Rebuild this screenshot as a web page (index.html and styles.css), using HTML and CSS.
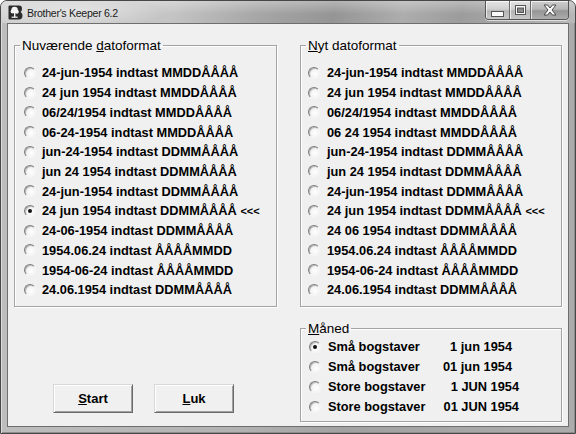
FILE: index.html
```html
<!DOCTYPE html>
<html lang="da">
<head>
<meta charset="utf-8">
<title>Brother's Keeper 6.2</title>
<link rel="stylesheet" href="styles.css">
</head>
<body>
<div class="window">
  <div class="titlebar">
    <svg class="appicon" width="15" height="15" viewBox="0 0 15 15">
      <path d="M0.5 1.5 Q0.5 0.5 1.5 0.5 H11 Q14 0.5 14 3.8 Q14 6 12.6 7 Q14.5 8 14.5 10.6 Q14.5 14.5 11 14.5 H1.5 Q0.5 14.5 0.5 13.5 Z" fill="#2b2b2b"/>
      <circle cx="6.6" cy="5" r="3.2" fill="#f4f4f4"/>
      <circle cx="4.6" cy="6.6" r="2" fill="#f4f4f4"/>
      <circle cx="8.8" cy="6.8" r="2" fill="#f4f4f4"/>
      <rect x="6" y="7" width="1.4" height="5.2" fill="#f4f4f4"/>
      <rect x="3.6" y="11.6" width="6" height="1.2" fill="#f4f4f4"/>
    </svg>
    <span class="title">Brother's Keeper 6.2</span>
    <div class="caption">
      <span class="cbtn min"><svg width="13" height="6" viewBox="0 0 13 6"><rect x="0.5" y="0.5" width="12" height="5" fill="#fafafa" stroke="#555"/></svg></span>
      <span class="cbtn max"><svg width="11" height="10" viewBox="0 0 11 10"><rect x="0.5" y="0.5" width="10" height="9" fill="#fafafa" stroke="#555"/><rect x="2.5" y="3" width="6" height="4.5" fill="#8a8a8a" stroke="#555"/></svg></span>
      <span class="cbtn close"><svg width="14" height="12" viewBox="0 0 14 12"><path d="M1 1 H4.6 L7 4 L9.4 1 H13 L9 6 L13 11 H9.4 L7 8 L4.6 11 H1 L5 6 Z" fill="#fbfbfb" stroke="#4a4a4a" stroke-width="1" stroke-linejoin="round"/></svg></span>
    </div>
  </div>
  <div class="client">
    <div class="col col-left">
      <fieldset class="group">
        <legend>Nuværende <u>d</u>atoformat</legend>
        <div class="list list-left">
          <label class="opt"><span class="radio"></span><span>24-jun-1954 indtast MMDDÅÅÅÅ</span></label>
          <label class="opt"><span class="radio"></span><span>24 jun 1954 indtast MMDDÅÅÅÅ</span></label>
          <label class="opt"><span class="radio"></span><span>06/24/1954 indtast MMDDÅÅÅÅ</span></label>
          <label class="opt"><span class="radio"></span><span>06-24-1954 indtast MMDDÅÅÅÅ</span></label>
          <label class="opt"><span class="radio"></span><span>jun-24-1954 indtast DDMMÅÅÅÅ</span></label>
          <label class="opt"><span class="radio"></span><span>jun 24 1954 indtast DDMMÅÅÅÅ</span></label>
          <label class="opt"><span class="radio"></span><span>24-jun-1954 indtast DDMMÅÅÅÅ</span></label>
          <label class="opt"><span class="radio on"></span><span>24 jun 1954 indtast DDMMÅÅÅÅ <span class="mark">&lt;&lt;&lt;</span></span></label>
          <label class="opt"><span class="radio"></span><span>24-06-1954 indtast DDMMÅÅÅÅ</span></label>
          <label class="opt"><span class="radio"></span><span>1954.06.24 indtast ÅÅÅÅMMDD</span></label>
          <label class="opt"><span class="radio"></span><span>1954-06-24 indtast ÅÅÅÅMMDD</span></label>
          <label class="opt"><span class="radio"></span><span>24.06.1954 indtast DDMMÅÅÅÅ</span></label>
        </div>
      </fieldset>
      <div class="buttons">
        <button class="btn"><u>S</u>tart</button>
        <button class="btn"><u>L</u>uk</button>
      </div>
    </div>
    <div class="col col-right">
      <fieldset class="group">
        <legend><u>N</u>yt datoformat</legend>
        <div class="list list-right">
          <label class="opt"><span class="radio"></span><span>24-jun-1954 indtast MMDDÅÅÅÅ</span></label>
          <label class="opt"><span class="radio"></span><span>24 jun 1954 indtast MMDDÅÅÅÅ</span></label>
          <label class="opt"><span class="radio"></span><span>06/24/1954 indtast MMDDÅÅÅÅ</span></label>
          <label class="opt"><span class="radio"></span><span>06 24 1954 indtast MMDDÅÅÅÅ</span></label>
          <label class="opt"><span class="radio"></span><span>jun-24-1954 indtast DDMMÅÅÅÅ</span></label>
          <label class="opt"><span class="radio"></span><span>jun 24 1954 indtast DDMMÅÅÅÅ</span></label>
          <label class="opt"><span class="radio"></span><span>24-jun-1954 indtast DDMMÅÅÅÅ</span></label>
          <label class="opt"><span class="radio"></span><span>24 jun 1954 indtast DDMMÅÅÅÅ <span class="mark">&lt;&lt;&lt;</span></span></label>
          <label class="opt"><span class="radio"></span><span>24 06 1954 indtast DDMMÅÅÅÅ</span></label>
          <label class="opt"><span class="radio"></span><span>1954.06.24 indtast ÅÅÅÅMMDD</span></label>
          <label class="opt"><span class="radio"></span><span>1954-06-24 indtast ÅÅÅÅMMDD</span></label>
          <label class="opt"><span class="radio"></span><span>24.06.1954 indtast DDMMÅÅÅÅ</span></label>
        </div>
      </fieldset>
      <fieldset class="group month">
        <legend><u>M</u>åned</legend>
        <div class="list list-month">
          <label class="opt mopt"><span class="radio on"></span><span class="mlabel">Små bogstaver</span><span class="mdate">1 jun 1954</span></label>
          <label class="opt mopt"><span class="radio"></span><span class="mlabel">Små bogstaver</span><span class="mdate">01 jun 1954</span></label>
          <label class="opt mopt"><span class="radio"></span><span class="mlabel">Store bogstaver</span><span class="mdate upper">1 JUN 1954</span></label>
          <label class="opt mopt"><span class="radio"></span><span class="mlabel">Store bogstaver</span><span class="mdate upper">01 JUN 1954</span></label>
        </div>
      </fieldset>
    </div>
  </div>
</div>
</body>
</html>
```
FILE: styles.css
```css
html, body {
  margin: 0;
  padding: 0;
}
body {
  width: 576px;
  height: 434px;
  overflow: hidden;
  background: #ffffff;
  font-family: "Liberation Sans", Arial, sans-serif;
  color: #000;
}
.window {
  box-sizing: border-box;
  width: 576px;
  height: 434px;
  border: 1px solid #474747;
  border-radius: 7px 7px 0 0;
  background: linear-gradient(90deg, #bdbdbd 0%, #b3b3b3 40%, #a2a2a2 60%, #acacac 100%);
  display: flex;
  flex-direction: column;
  padding: 0 6px 6px;
  box-shadow: inset 1px 1px 0 #dcdcdc, inset -1px -1px 0 #8c8c8c;
}
.titlebar {
  height: 22px;
  margin: 0 -6px;
  padding: 0 6px;
  border-radius: 6px 6px 0 0;
  display: flex;
  align-items: center;
  background:
    radial-gradient(ellipse 95px 14px at 70px 12px, rgba(255,255,255,0.5), rgba(255,255,255,0) 100%),
    linear-gradient(180deg, rgba(255,255,255,0.3) 0%, rgba(255,255,255,0) 60%),
    linear-gradient(100deg, #cfcfcf 0%, #c4c4c4 30%, #a6a6a6 45%, #959595 58%, #adadad 70%, #9c9c9c 80%, #b8b8b8 100%);
}
.appicon {
  margin-left: 1px;
  margin-top: 1px;
  flex: none;
}
.title {
  margin-left: 4px;
  font-size: 10.6px;
  letter-spacing: -0.3px;
  color: #1a1a1a;
  margin-top: 1px;
}
.caption {
  margin-left: auto;
  align-self: flex-start;
  display: flex;
  height: 18px;
  border: 1px solid #555;
  border-top: none;
  border-radius: 0 0 4px 4px;
  overflow: hidden;
  box-shadow: 0 1px 0 rgba(255,255,255,0.6);
}
.cbtn {
  display: flex;
  align-items: center;
  justify-content: center;
  height: 18px;
  background: linear-gradient(180deg, #e4e4e4 0%, #d0d0d0 45%, #b4b4b4 55%, #c8c8c8 100%);
  box-shadow: inset 1px 1px 0 rgba(255,255,255,0.7);
}
.cbtn.min {
  width: 23px;
  border-right: 1px solid #6a6a6a;
}
.cbtn.min svg {
  margin-top: 7px;
}
.cbtn.max {
  width: 20px;
  border-right: 1px solid #6a6a6a;
}
.cbtn.close {
  width: 37px;
  background: linear-gradient(180deg, #cfcfcf 0%, #b6b6b6 45%, #959595 55%, #adadad 100%);
}
.client {
  flex: 1;
  border: 1px solid #6e6e6e;
  background: #f0f0f0;
  display: flex;
  gap: 23px;
  padding: 13px 6px 0 6px;
}
.col {
  display: flex;
  flex-direction: column;
}
.col-left {
  width: 263px;
}
.col-right {
  width: 262px;
}
.group {
  margin: 0;
  padding: 0 0 6px;
  min-width: 0;
  border: 1px solid #a3a3a3;
  box-shadow: inset 1px 1px 0 #ffffff, 1px 1px 0 #ffffff;
}
.group legend {
  margin-left: 5px;
  padding: 0 2px;
  font-size: 13.5px;
  line-height: 17px;
  color: #000;
}
.list {
  display: flex;
  flex-direction: column;
  margin-top: 9px;
}
.list-left {
  padding-left: 9px;
}
.list-right {
  padding-left: 7px;
}
.opt {
  height: 19.73px;
  display: flex;
  align-items: center;
  gap: 6px;
  font-weight: bold;
  font-size: 12.8px;
  white-space: nowrap;
}
.list-right .opt {
  gap: 7px;
}
.mark {
  font-size: 11px;
}
.radio {
  flex: none;
  position: relative;
  width: 12px;
  height: 12px;
  box-sizing: border-box;
  border-radius: 50%;
  border: 1px solid;
  border-color: #7e7e7e #f6f6f6 #f6f6f6 #7e7e7e;
  background: radial-gradient(circle at 60% 60%, #ffffff 0%, #f2f2f2 55%, #dadada 100%);
  box-shadow: inset 1px 1px 0 #b8b8b8;
}
.radio.on::after {
  content: "";
  position: absolute;
  left: 3px;
  top: 3px;
  width: 4px;
  height: 4px;
  border-radius: 50%;
  background: #111;
}
.month {
  margin-top: 13px;
  padding-bottom: 4px;
}
.list-month {
  margin-top: 0;
  padding-left: 8px;
}
.mopt {
  height: 20px;
  gap: 7px;
}
.mlabel {
  width: 108px;
}
.mdate {
  width: 69px;
  text-align: right;
}
.mdate.upper {
  width: 76px;
}
.buttons {
  display: flex;
  gap: 21px;
  margin-top: 77px;
  padding-left: 39px;
}
.btn {
  width: 80px;
  height: 29px;
  margin: 0;
  padding: 0;
  font-family: "Liberation Sans", Arial, sans-serif;
  font-weight: bold;
  font-size: 13px;
  color: #000;
  background: #f0f0f0;
  border: 1px solid;
  border-color: #d8d8d8 #6a6a6a #6a6a6a #d8d8d8;
  box-shadow: inset 1px 1px 0 #ffffff, inset -1px -1px 0 #a0a0a0;
}
```
